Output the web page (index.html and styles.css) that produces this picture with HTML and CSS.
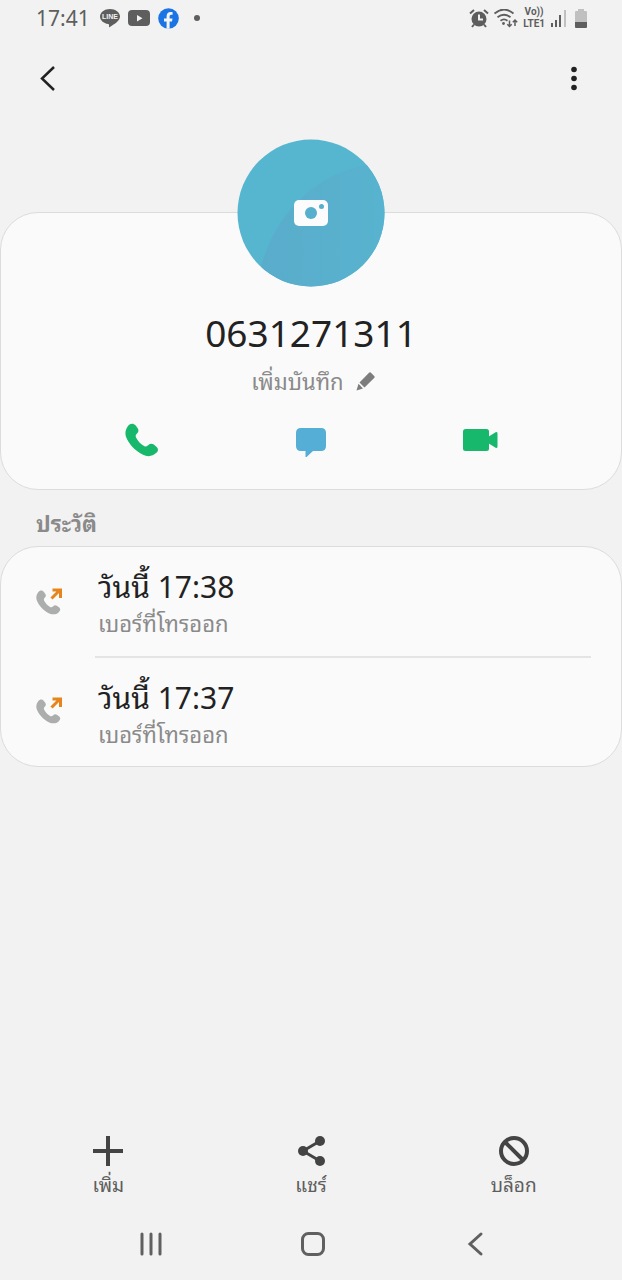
FILE: index.html
```html
<!DOCTYPE html>
<html lang="th">
<head>
    <meta charset="UTF-8">
    <meta name="viewport" content="width=device-width, initial-scale=1.0">
    <title>0631271311</title>
    <link rel="stylesheet" href="styles.css">
</head>
<body>

<svg class="symbols" aria-hidden="true">
    <symbol id="icon-phone" viewBox="0 0 34 34">
        <path d="M3 3C5 .2 8.500-.2 10.500 2.300l2 2.800c1.400 2 1.200 3.600-.3 5.200C10.500 12 10.300 13 11.300 15c2 3.600 4.500 6.200 7.800 8 1.700.9 2.900.6 4.300-.9 1.700-1.700 3.500-1.800 5.400-.5l2.800 2.300c2 1.800 1.800 4.200-.6 6.200C27.800 33.500 22.500 34 18 31.800 9.500 27.500 3.500 20.500 1 13.800-.3 9.800.7 6 3 3z" fill="currentColor"/>
    </symbol>
</svg>

<div class="status-bar">
    <div class="status-left">
        <time class="clock">17:41</time>
        <svg width="20" height="20" viewBox="0 0 20 20">
            <path d="M10 1C4.500 1 0 4.400 0 8.600c0 3.700 3.500 6.800 8.200 7.500 1 .2 1 .8.800 2.600 0 .5.300.6.800.3C14 16.500 20 13 20 8.600 20 4.400 15.500 1 10 1z" fill="#5e5e5e"/>
            <text x="10" y="11" class="line-text">LINE</text>
        </svg>
        <svg width="22" height="16" viewBox="0 0 22 16">
            <rect width="22" height="16" rx="4" fill="#5e5e5e"/>
            <path d="M9 5v6.500l5.500-3.300z" fill="#f2f2f2"/>
        </svg>
        <svg width="21" height="21" viewBox="0 0 21 21">
            <circle cx="10.500" cy="10.500" r="10.300" fill="#1b74e4"/>
            <path d="M8.600 20.800v-7.300H6v-3h2.600V8.200c0-2.700 1.600-4.200 4-4.200 1.100 0 2 .2 2 .2v2.500h-1.300c-1.300 0-1.700.8-1.700 1.600v2.200h2.900l-.5 3h-2.400v7.300z" fill="#f4f4f4"/>
        </svg>
        <span class="dot"></span>
    </div>
    <div class="status-right">
        <svg width="20" height="19" viewBox="0 0 20 19" fill="none" stroke="#5e5e5e">
            <circle cx="10" cy="10" r="7.500" fill="#5e5e5e" stroke="none"/>
            <path d="M1 4.500 5 1M19 4.500 15 1M5 15.500l-2 2.500M15 15.500l2 2.500" stroke-width="2"/>
            <path d="M10 5.500v5h4" stroke="#f2f2f2" stroke-width="2"/>
        </svg>
        <svg width="24" height="19" viewBox="0 0 24 19" fill="none" stroke="#5e5e5e" stroke-width="1.800">
            <path d="M.5 4.500c6-5 13-5 19 0M3.500 8.300c4.500-3.600 8.500-3.600 13 0M6.500 11.800c2.500-2 4.500-2 7 0"/>
            <circle cx="9.500" cy="14.500" r="1.400" fill="#5e5e5e" stroke="none"/>
            <path d="M15.500 11.500v6M13.300 15.300l2.200 2.200 2.200-2.200M21 17v-6M18.800 13.200 21 11l2.200 2.200" stroke-width="1.500"/>
        </svg>
        <span class="volte"><span>Vo))</span><span>LTE1</span></span>
        <svg width="17" height="18" viewBox="0 0 17 18" fill="#5e5e5e">
            <path d="M1 14h2v4H1zM5 11h2v7H5zM9 6h2v12H9z"/>
            <path d="M14 1h2v17h-2z" fill="#c0c0c0"/>
        </svg>
        <svg class="battery" width="12" height="19" viewBox="0 0 12 19">
            <path d="M3 0h6v2h2q1 0 1 1v10H0V3q0-1 1-1h2z" fill="#c0c0c0"/>
            <path d="M0 13h12v5q0 1-1 1H1q-1 0-1-1z" fill="#5e5e5e"/>
        </svg>
    </div>
</div>

<header class="top-bar">
    <button type="button" aria-label="กลับ">
        <svg width="24" height="28" viewBox="0 0 24 28"><path d="M18 3 6 14.500 18 26" fill="none" stroke="#222" stroke-width="2.500"/></svg>
    </button>
    <button type="button" aria-label="ตัวเลือกเพิ่มเติม">
        <svg width="24" height="28" viewBox="0 0 24 28" fill="#222"><circle cx="12" cy="5.500" r="2.800"/><circle cx="12" cy="14.500" r="2.800"/><circle cx="12" cy="23.500" r="2.800"/></svg>
    </button>
</header>

<main>
    <section class="card contact">
        <button type="button" class="avatar" aria-label="เพิ่มรูปภาพ">
            <svg width="148" height="148" viewBox="0 0 148 148">
                <defs>
                    <clipPath id="avatar-clip"><circle cx="74" cy="74" r="73.500"/></clipPath>
                    <linearGradient id="shade"><stop offset="0" stop-color="#5aaccb"/><stop offset="1" stop-color="#57b3cf"/></linearGradient>
                </defs>
                <g clip-path="url(#avatar-clip)">
                    <rect width="148" height="148" fill="#56b6cf"/>
                    <path d="M22 135C34 80 75 35 130 26L148 24V148H22z" fill="url(#shade)"/>
                </g>
                <rect x="57" y="61" width="34" height="26" rx="5" fill="#fcfcfc"/>
                <circle cx="74" cy="74" r="6" fill="#56afcc"/>
                <circle cx="84.500" cy="67.500" r="2.500" fill="#56afcc"/>
            </svg>
        </button>
        <h1>0631271311</h1>
        <button type="button" class="note">
            <span>เพิ่มบันทึก</span>
            <svg width="19" height="19" viewBox="0 0 19 19" fill="#7d7d7d"><path d="M13.300.6q.7-.6 1.400 0l3.700 3.700q.6.700 0 1.400L8.500 15.500 3.500 10.500zM2.500 11.800 7 16.500.5 18.500z"/></svg>
        </button>
        <div class="contact-actions">
            <button type="button" class="call" aria-label="โทร">
                <svg width="34" height="34"><use href="#icon-phone"/></svg>
            </button>
            <button type="button" aria-label="ข้อความ">
                <svg width="34" height="34" viewBox="0 0 34 34"><path d="M7 5h20q5 0 5 5v13q0 5-5 5h-8l-7.500 7v-7H7q-5 0-5-5V10q0-5 5-5z" fill="#54aed5"/></svg>
            </button>
            <button type="button" aria-label="วิดีโอคอล">
                <svg width="36" height="34" viewBox="0 0 36 34" fill="#17b86b"><rect x="1" y="6" width="26" height="22" rx="2.500"/><path d="M26 14l8-5q1.500 0 1.500 1v14q0 1-1.500 1l-8-5z"/></svg>
            </button>
        </div>
    </section>

    <h2>ประวัติ</h2>
    <ul class="card history">
        <li>
            <svg width="28" height="28" viewBox="0 0 28 28">
                <use href="#icon-phone" y="2" width="25" height="25" class="log-phone"/>
                <path d="M15.500 10.500 23 3M16.500 2H24.500V10" class="log-arrow"/>
            </svg>
            <div class="entry">
                <p class="when">วันนี้ 17:38</p>
                <p class="kind">เบอร์ที่โทรออก</p>
            </div>
        </li>
        <li>
            <svg width="28" height="28" viewBox="0 0 28 28">
                <use href="#icon-phone" y="2" width="25" height="25" class="log-phone"/>
                <path d="M15.500 10.500 23 3M16.500 2H24.500V10" class="log-arrow"/>
            </svg>
            <div class="entry">
                <p class="when">วันนี้ 17:37</p>
                <p class="kind">เบอร์ที่โทรออก</p>
            </div>
        </li>
    </ul>
</main>

<footer class="actions">
    <button type="button">
        <svg width="32" height="32" viewBox="0 0 32 32"><path d="M16 1v30M1 16h30" stroke="#444" stroke-width="4"/></svg>
        <span>เพิ่ม</span>
    </button>
    <button type="button">
        <svg width="32" height="32" viewBox="0 0 32 32" fill="#444"><path d="M25 6 8 16l17 10" fill="none" stroke="#444" stroke-width="3"/><circle cx="25" cy="6" r="5"/><circle cx="8" cy="16" r="5"/><circle cx="25" cy="26" r="5"/></svg>
        <span>แชร์</span>
    </button>
    <button type="button">
        <svg width="32" height="32" viewBox="0 0 32 32" fill="none" stroke="#444" stroke-width="4"><circle cx="16" cy="16" r="13"/><path d="M7 7l18 18"/></svg>
        <span>บล็อก</span>
    </button>
</footer>

<nav class="nav-bar">
    <button type="button" aria-label="แอพล่าสุด">
        <svg width="26" height="26" viewBox="0 0 26 26"><path d="M4 3v20M13 3v20M22 3v20" stroke="#606060" stroke-width="3" stroke-linecap="round"/></svg>
    </button>
    <button type="button" aria-label="หน้าหลัก">
        <svg width="26" height="26" viewBox="0 0 26 26"><rect x="2.500" y="2.500" width="21" height="21" rx="6" fill="none" stroke="#606060" stroke-width="3"/></svg>
    </button>
    <button type="button" aria-label="ย้อนกลับ">
        <svg width="26" height="26" viewBox="0 0 26 26"><path d="M19 3 8 13l11 10" fill="none" stroke="#606060" stroke-width="3" stroke-linecap="round"/></svg>
    </button>
</nav>

</body>
</html>
```

FILE: styles.css
```css
* {
    box-sizing: border-box;
}
body {
    display: flex;
    flex-direction: column;
    min-height: 100vh;
    margin: 0;
    background-color: #f2f2f2;
    color: #222;
    font-family: "Noto Sans", "Noto Sans Thai Looped", "Loma", "Garuda", sans-serif;
}
h1, h2, p, ul {
    margin: 0;
    padding: 0;
    font-weight: normal;
}
button {
    padding: 0;
    border: none;
    background: none;
    color: inherit;
    font: inherit;
    cursor: pointer;
}
svg {
    display: block;
    flex-shrink: 0;
}
.symbols {
    position: absolute;
    width: 0;
    height: 0;
}

/* Status bar */
.status-bar {
    display: flex;
    justify-content: space-between;
    height: 36px;
    padding: 0 35px 0 36px;
    color: #5e5e5e;
}
.status-left, .status-right {
    display: flex;
    align-items: center;
}
.status-left {
    gap: 8px;
}
.status-right {
    gap: 5px;
}
.clock {
    margin-right: 2px;
    font-size: 21px;
}
.line-text {
    fill: #f2f2f2;
    font-family: "Liberation Sans", sans-serif;
    font-size: 7px;
    font-weight: bold;
    text-anchor: middle;
}
.dot {
    width: 6px;
    height: 6px;
    margin-left: 7px;
    border-radius: 50%;
    background-color: #5e5e5e;
}
.volte {
    display: flex;
    flex-direction: column;
    align-items: center;
    font-family: Roboto, sans-serif;
    font-size: 10px;
    font-weight: bold;
    line-height: 12px;
}
.battery {
    margin-left: 3px;
}

/* Top bar */
.top-bar {
    display: flex;
    justify-content: space-between;
    padding: 28px 36px;
}

/* Cards */
.card {
    border: 1px solid #dcdcdc;
    border-radius: 38px;
    background-color: #fafafa;
}
.contact {
    display: flex;
    flex-direction: column;
    align-items: center;
    min-height: 278px;
    margin-top: 92px;
}
.avatar {
    margin-top: -74px;
    border-radius: 50%;
}
.contact h1 {
    margin-top: 20px;
    font-size: 37px;
    line-height: 52px;
}
.note {
    display: flex;
    align-items: center;
    gap: 12px;
    margin-top: 6px;
    padding-left: 4px;
    color: #8a8a8a;
    font-size: 22px;
    line-height: 32px;
}
.contact-actions {
    display: grid;
    grid-template-columns: repeat(3, 1fr);
    justify-items: center;
    width: 100%;
    margin-top: 26px;
    padding: 0 9%;
}
.call {
    color: #17b86b;
}

/* Call history */
h2 {
    padding: 17px 36px 7px;
    color: #8a8a8a;
    font-size: 22px;
    font-weight: bold;
    line-height: 32px;
}
.history {
    list-style: none;
}
.history li {
    display: flex;
    align-items: center;
    padding: 0 30px 0 35px;
}
.entry {
    flex: 1;
    margin-left: 31px;
    padding: 18px 0 19px 3px;
}
.history li + li .entry {
    border-top: 2px solid #e4e4e4;
    padding-bottom: 18px;
}
.when {
    font-size: 30px;
    line-height: 44px;
}
.kind {
    color: #8a8a8a;
    font-size: 22px;
    line-height: 28px;
}
.log-phone {
    color: #acaeae;
}
.log-arrow {
    fill: none;
    stroke: #e5851c;
    stroke-width: 3;
}

/* Bottom buttons */
.actions {
    display: grid;
    grid-template-columns: repeat(3, 1fr);
    margin-top: auto;
    padding: 0 7px;
}
.actions button {
    display: flex;
    flex-direction: column;
    align-items: center;
    gap: 4px;
    color: #5e5e5e;
    font-size: 19px;
    line-height: 28px;
}
.nav-bar {
    display: grid;
    grid-template-columns: repeat(3, 1fr);
    justify-items: center;
    padding: 32px 66px 23px 70px;
}
```
